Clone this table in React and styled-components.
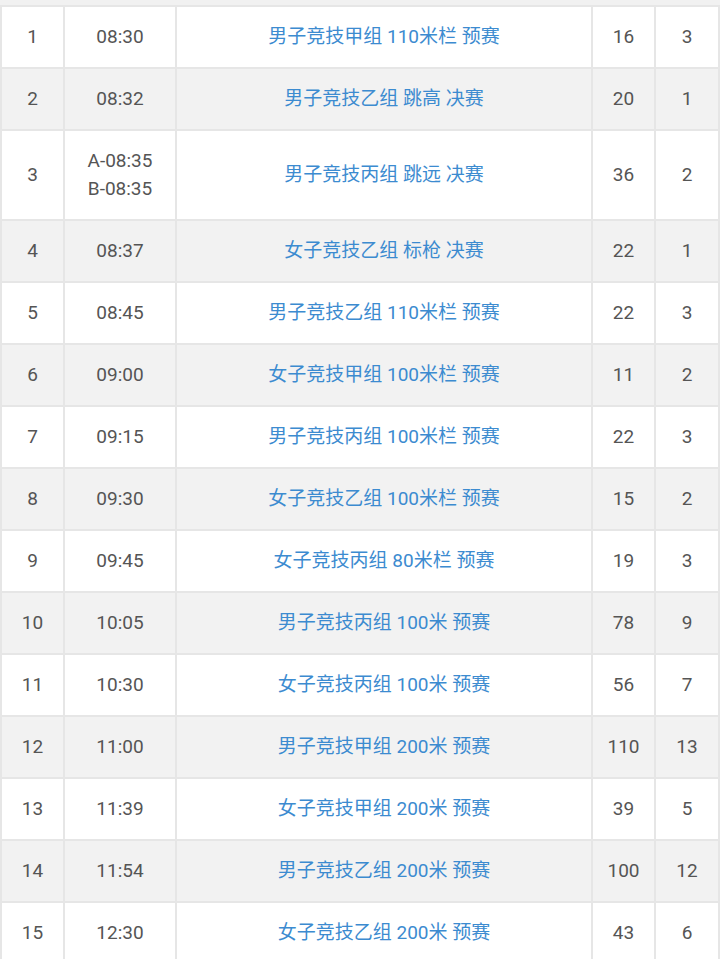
import React from "react";
import styled, { createGlobalStyle } from "styled-components";

const Global = createGlobalStyle`
  html, body { margin: 0; padding: 0; background: #ffffff; }
  body { font-family: Roboto, "Noto Sans CJK SC", sans-serif; }
`;

const Page = styled.div`
  width: 720px;
  height: 959px;
  overflow: hidden;
  background: #e6e6e6;
`;

const TopStrip = styled.div`
  height: 5px;
  background: #f1f1f1;
`;

const Table = styled.table`
  width: 720px;
  border-collapse: separate;
  border-spacing: 2px;
  background: #e6e6e6;
  table-layout: fixed;
  margin: 0;
`;

const Row = styled.tr`
  background: ${(p) => (p.$alt ? "#f2f2f2" : "#ffffff")};
`;

const Cell = styled.td`
  height: ${(p) => (p.$tall ? "88px" : "60px")};
  padding: 0;
  text-align: center;
  vertical-align: middle;
  font-family: Roboto, "Noto Sans CJK SC", sans-serif;
  font-size: 19px;
  line-height: 28px;
  color: ${(p) => (p.$link ? "#3c8bd0" : "#555555")};
`;

const TimeLine = styled.div`
  line-height: 28px;
`;

const rows = [
  ["1", ["08:30"], "男子竞技甲组 110米栏 预赛", "16", "3"],
  ["2", ["08:32"], "男子竞技乙组 跳高 决赛", "20", "1"],
  ["3", ["A-08:35", "B-08:35"], "男子竞技丙组 跳远 决赛", "36", "2"],
  ["4", ["08:37"], "女子竞技乙组 标枪 决赛", "22", "1"],
  ["5", ["08:45"], "男子竞技乙组 110米栏 预赛", "22", "3"],
  ["6", ["09:00"], "女子竞技甲组 100米栏 预赛", "11", "2"],
  ["7", ["09:15"], "男子竞技丙组 100米栏 预赛", "22", "3"],
  ["8", ["09:30"], "女子竞技乙组 100米栏 预赛", "15", "2"],
  ["9", ["09:45"], "女子竞技丙组 80米栏 预赛", "19", "3"],
  ["10", ["10:05"], "男子竞技丙组 100米 预赛", "78", "9"],
  ["11", ["10:30"], "女子竞技丙组 100米 预赛", "56", "7"],
  ["12", ["11:00"], "男子竞技甲组 200米 预赛", "110", "13"],
  ["13", ["11:39"], "女子竞技甲组 200米 预赛", "39", "5"],
  ["14", ["11:54"], "男子竞技乙组 200米 预赛", "100", "12"],
  ["15", ["12:30"], "女子竞技乙组 200米 预赛", "43", "6"],
];

export default function App() {
  return (
    <Page>
      <Global />
      <TopStrip />
      <Table>
        <colgroup>
          <col style={{ width: "61px" }} />
          <col style={{ width: "110px" }} />
          <col style={{ width: "414px" }} />
          <col style={{ width: "61px" }} />
          <col style={{ width: "62px" }} />
        </colgroup>
        <tbody>
          {rows.map(([n, times, name, count, groups], i) => {
            const tall = times.length > 1;
            return (
              <Row key={n} $alt={i % 2 === 1}>
                <Cell $tall={tall}>{n}</Cell>
                <Cell $tall={tall}>
                  {times.map((t) => (
                    <TimeLine key={t}>{t}</TimeLine>
                  ))}
                </Cell>
                <Cell $tall={tall} $link>
                  {name}
                </Cell>
                <Cell $tall={tall}>{count}</Cell>
                <Cell $tall={tall}>{groups}</Cell>
              </Row>
            );
          })}
        </tbody>
      </Table>
    </Page>
  );
}
